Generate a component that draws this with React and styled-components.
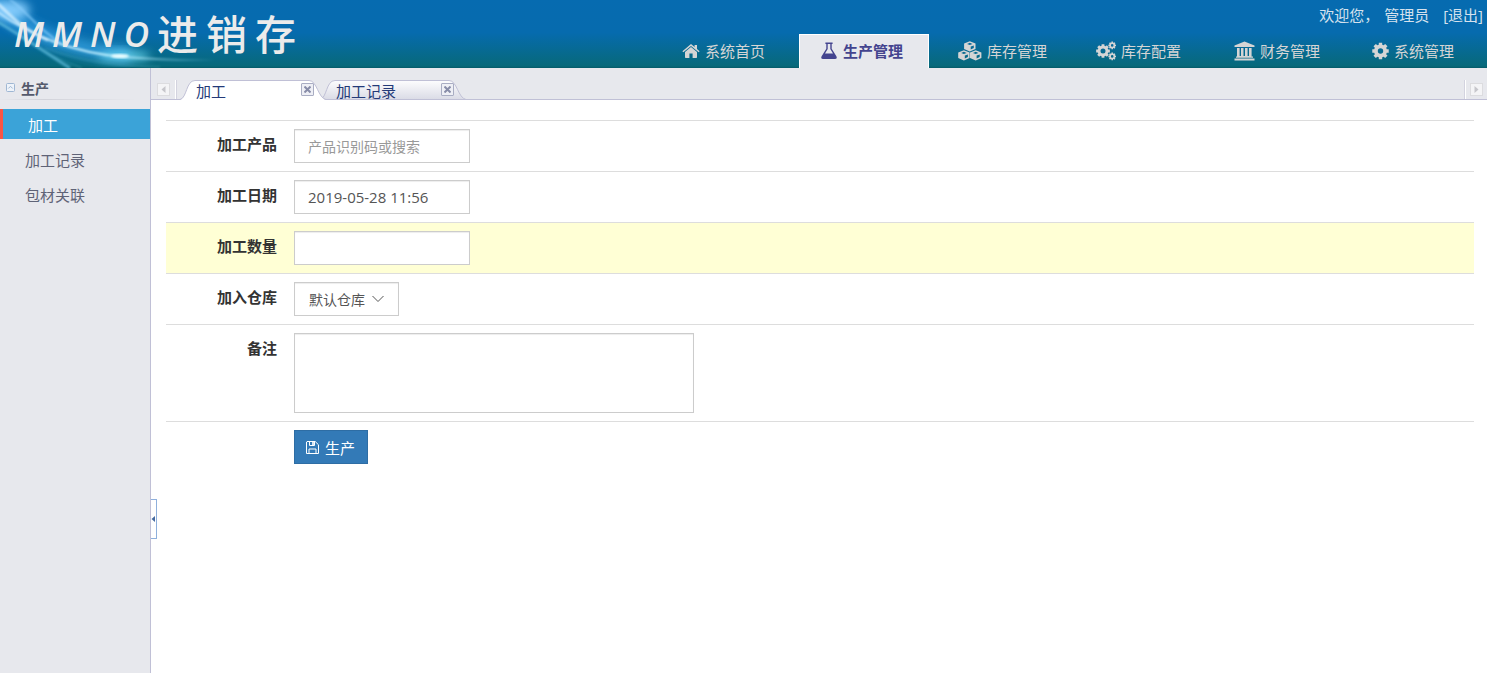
import { useState } from 'react';
import styled, { createGlobalStyle } from 'styled-components';

const GlobalStyle = createGlobalStyle`
  * {
    box-sizing: border-box;
  }
  body {
    margin: 0;
    background: #fff;
    color: #333;
    font-family: "Open Sans", "Noto Sans CJK SC", sans-serif;
    font-size: 15px;
    line-height: 20px;
  }
  input, select, textarea, button {
    font-family: inherit;
    margin: 0;
  }
`;

const Page = styled.div`
  display: flex;
  flex-direction: column;
  min-height: 100vh;
`;

/* header */
const Header = styled.header`
  position: relative;
  display: flex;
  justify-content: space-between;
  height: 68px;
  overflow: hidden;
  background: linear-gradient(#066bb0 0%, #066bae 48%, #07697a 97%, #045a68 100%);
`;

const Glow = styled.svg`
  position: absolute;
  left: 0;
  top: 0;
`;

const Logo = styled.h1`
  position: relative;
  display: flex;
  align-items: center;
  gap: 8px;
  margin: 0;
  padding: 0 0 0 14px;
  color: #ebebeb;
  font-size: 35px;
  font-style: italic;
  font-weight: 600;
  line-height: 68px;
`;

const LogoHan = styled.span`
  font-size: 41px;
  font-style: normal;
  font-weight: 500;
`;

const HeaderSide = styled.div`
  display: flex;
  flex-direction: column;
  justify-content: space-between;
  align-items: flex-end;
`;

const UserBar = styled.div`
  display: flex;
  gap: 5px;
  padding: 5px 4px 0 0;
  color: #d6e2ee;

  a {
    margin-left: 9px;
    color: inherit;
    text-decoration: none;
  }
`;

const Nav = styled.nav`
  display: flex;
  gap: 8px;
  padding-right: 6px;
`;

const NavLink = styled.a`
  display: flex;
  align-items: center;
  gap: 5px;
  width: 130px;
  height: 34px;
  padding: 0 0 2px 20px;
  color: ${(p) => (p.$active ? '#44448f' : '#d5d5d5')};
  background: ${(p) => (p.$active ? '#e7e8ed' : 'transparent')};
  border: solid ${(p) => (p.$active ? '#fff' : 'transparent')};
  border-width: 1px 1px 0;
  font-weight: ${(p) => (p.$active ? 700 : 400)};
  text-decoration: none;
  white-space: nowrap;
`;

/* body */
const Body = styled.div`
  display: flex;
  flex: 1;
`;

const Sidebar = styled.aside`
  position: relative;
  flex: none;
  width: 151px;
  background: #e7e8ed;
  border-right: 1px solid #c0c0d6;
`;

const GroupTitle = styled.h2`
  display: flex;
  align-items: center;
  gap: 6px;
  height: 32px;
  margin: 0 0 9px;
  padding: 11px 0 0 6px;
  color: #555a6c;
  font-size: 14px;
  border-bottom: 1px solid;
  border-image: linear-gradient(90deg, #e7e8ed, #d2d3da 30%, #e7e8ed 90%) 1;
`;

const FoldButton = styled.button`
  display: flex;
  padding: 0 0 3px;
  background: none;
  border: 0;
`;

const Menu = styled.ul`
  display: flex;
  flex-direction: column;
  gap: 5px;
  margin: 0;
  padding: 0;
  list-style: none;
`;

const MenuLink = styled.a`
  display: block;
  height: 30px;
  padding: 6px 0 0 25px;
  color: ${(p) => (p.$active ? '#fff' : '#5f6377')};
  background: ${(p) => (p.$active ? '#3ba3d8' : 'transparent')};
  border-left: ${(p) => (p.$active ? '3px solid #fb5443' : '0')};
  text-decoration: none;
`;

const Collapse = styled.button`
  position: absolute;
  left: 151px;
  bottom: 134px;
  display: flex;
  align-items: center;
  width: 6px;
  height: 40px;
  padding: 0;
  background: #fff;
  border: 1px solid #8fb0dc;
  border-left: 0;
`;

const Main = styled.main`
  flex: 1;
  min-width: 0;
`;

/* tab strip */
const TabBar = styled.div`
  display: flex;
  align-items: flex-end;
  height: 32px;
  background: linear-gradient(#c0c0d6, #c0c0d6) bottom / 100% 1px no-repeat #e7e8ed;
`;

const Scroller = styled.div`
  display: flex;
  align-items: center;
  justify-content: center;
  width: ${(p) => (p.$side === 'left' ? 25 : 22)}px;
  height: 19px;
  margin-bottom: 1px;
  border: solid #fff;
  border-width: ${(p) => (p.$side === 'left' ? '0 1px 0 0' : '0 0 0 1px')};
  box-shadow: ${(p) => (p.$side === 'left' ? '1px' : '-1px')} 0 #d3d3df;
`;

const ScrollButton = styled.button`
  display: flex;
  align-items: center;
  justify-content: center;
  width: 13px;
  height: 13px;
  padding: 0;
  background: #f4f4f6;
  border: 1px solid #dcdcdf;
`;

const Tabs = styled.div`
  display: flex;
  flex: 1;
  padding-left: 4px;
`;

const Tab = styled.div`
  position: relative;
  z-index: ${(p) => (p.$active ? 1 : 0)};
  display: flex;
  align-items: center;
  justify-content: space-between;
  width: 146px;
  height: 20px;
  margin-right: -6px;
  padding: 0 12px 1px 16px;
`;

const TabShape = styled.svg`
  position: absolute;
  left: 0;
  top: 0;
`;

const TabName = styled.a`
  position: relative;
  padding-top: 2px;
  color: #243a78;
  text-decoration: none;
`;

const CloseButton = styled.button`
  position: relative;
  display: flex;
  align-items: center;
  justify-content: center;
  width: 13px;
  height: 13px;
  padding: 0;
  background: #eeeff5;
  border: 1px solid #a9adc3;
  border-radius: 1px;
`;

/* form */
const Form = styled.form`
  margin: 20px 13px 0 15px;
`;

const Row = styled.div`
  display: flex;
  align-items: flex-start;
  gap: 17px;
  padding: 8px 0;
  border-top: 1px solid #ddd;
  background: ${(p) => (p.$highlight ? '#ffffd5' : '#fff')};
`;

const Label = styled.label`
  flex: none;
  width: 111px;
  padding-top: 5px;
  color: #333;
  font-weight: 700;
  text-align: right;
`;

const TextInput = styled.input`
  width: 176px;
  height: 34px;
  padding: 0 13px;
  color: #555;
  font-size: 15px;
  background: #fff;
  border: 1px solid #ccc;
  border-radius: 0;
  box-shadow: inset 0 1px 1px rgba(0, 0, 0, 0.075);
  outline: none;

  &::placeholder {
    color: #999;
    font-size: 14px;
    opacity: 1;
  }
`;

const SelectBox = styled.div`
  position: relative;
  display: flex;
  align-items: center;

  svg {
    position: absolute;
    right: 15px;
    pointer-events: none;
  }
`;

const Select = styled.select`
  width: 105px;
  height: 34px;
  padding: 0 14px;
  appearance: none;
  color: #555;
  font-size: 14px;
  background: #fff;
  border: 1px solid #ccc;
  border-radius: 0;
  box-shadow: inset 0 1px 1px rgba(0, 0, 0, 0.075);
`;

const TextArea = styled.textarea`
  display: block;
  width: 400px;
  height: 80px;
  padding: 6px 12px;
  font-size: 15px;
  border: 1px solid #ccc;
  border-radius: 0;
  box-shadow: inset 0 1px 1px rgba(0, 0, 0, 0.075);
  resize: none;
`;

const SubmitButton = styled.button`
  display: flex;
  align-items: center;
  gap: 6px;
  height: 34px;
  padding: 0 12px 0 11px;
  color: #fff;
  font-size: 15px;
  background: #337ab7;
  border: 1px solid #2e6da4;
`;

/* icons */
const gear = (cx, cy, outer, inner, hole, turn = 0) => {
  const pts = [];
  for (let i = 0; i < 8; i++) {
    const a = (i * Math.PI) / 4 + turn;
    [[-0.27, inner], [-0.2, outer], [0.2, outer], [0.27, inner]].forEach(([d, r]) => {
      pts.push(`${(cx + r * Math.cos(a + d)).toFixed(2)} ${(cy + r * Math.sin(a + d)).toFixed(2)}`);
    });
  }
  return `M${pts.join('L')}ZM${cx - hole} ${cy}a${hole} ${hole} 0 1 0 ${hole * 2} 0a${hole} ${hole} 0 1 0 ${-hole * 2} 0Z`;
};

const HomeIcon = () => (
  <svg width="18" height="16" viewBox="0 0 18 16" fill="currentColor">
    <path d="M9 4 15 9V14.3Q15 15 14.3 15H10.6V10.6H7.4V15H3.7Q3 15 3 14.3V9Z" />
    <path d="M9 1 12.6 4V2H15V6L17.6 8.2 16.7 9.3 9 2.9 1.3 9.3.4 8.2Z" />
  </svg>
);

const FlaskIcon = () => (
  <svg width="18" height="18" viewBox="-1 0 18 18" fill="currentColor">
    <path fillRule="evenodd" d="M4.4 0.6H11.6V2H10.7V6.7L15.4 14.3Q16.6 17 14 17H2Q-.6 17 .6 14.3L5.3 6.7V2H4.4ZM6.7 2V7.1L4 11.5H12L9.3 7.1V2Z" />
  </svg>
);

const Cube = ({ x, y }) => (
  <g transform={`translate(${x} ${y})`}>
    <path fillRule="evenodd" d="M5.7 0 11.4 2.2V7.8L5.7 10.4 0 7.8V2.2ZM5.7 1.6 3 2.7 5.7 3.8 8.4 2.7ZM6.6 5.4V8.2L9.7 6.8V4.2Z" />
  </g>
);

const CubesIcon = () => (
  <svg width="24" height="20" viewBox="0 0 24 20" fill="currentColor">
    <Cube x={6.1} y={0.2} />
    <Cube x={0.2} y={9.2} />
    <Cube x={12} y={9.2} />
  </svg>
);

const CogsIcon = () => (
  <svg width="20" height="20" viewBox="0 0 20 20" fill="currentColor" fillRule="evenodd">
    <path d={gear(7, 10, 7, 5.4, 2.5)} />
    <path d={gear(16.2, 4.4, 3.9, 3, 1.3)} />
    <path d={gear(16.2, 15.4, 3.9, 3, 1.3)} />
  </svg>
);

const BankIcon = () => (
  <svg width="21" height="20" viewBox="0 0 21 20" fill="currentColor">
    <path d="M10.5.5 20.5 4.5V6H.5V4.5ZM3 7H5.6V15H7V7H9.5V15H11V7H13.6V15H15V7H17.6V15.4H19V16.7H2V15.4H3ZM.5 17.5H20.5V19.5H.5Z" />
  </svg>
);

const CogIcon = () => (
  <svg width="17" height="18" viewBox="0 0 17 18" fill="currentColor" fillRule="evenodd">
    <path d={gear(8.5, 9, 8.4, 6.5, 2.7)} />
  </svg>
);

const SaveIcon = () => (
  <svg width="13" height="13" viewBox="0 0 13 13" fill="none" stroke="currentColor">
    <path d="M1 .5H9.2L12.5 3.8V12.5H.5V1ZM3.5.5V4.5H8.5V.5M3 12.5V8H10V12.5" />
    <path d="M7 1V4" strokeWidth="1.6" />
  </svg>
);

const navItems = [
  { name: '系统首页', Icon: HomeIcon },
  { name: '生产管理', Icon: FlaskIcon },
  { name: '库存管理', Icon: CubesIcon },
  { name: '库存配置', Icon: CogsIcon },
  { name: '财务管理', Icon: BankIcon },
  { name: '系统管理', Icon: CogIcon },
];

const menuItems = ['加工', '加工记录', '包材关联'];
const tabItems = ['加工', '加工记录'];

const HeaderGlow = () => (
  <Glow width="310" height="68" viewBox="0 0 310 68" fill="none" aria-hidden="true">
    <defs>
      <filter id="soft" x="-30%" y="-60%" width="160%" height="220%">
        <feGaussianBlur stdDeviation="5" />
      </filter>
      <filter id="fine" x="-10%" y="-20%" width="120%" height="140%">
        <feGaussianBlur stdDeviation="1" />
      </filter>
      <linearGradient id="fade">
        <stop offset="0" stopColor="#bfe6ff" />
        <stop offset="0.5" stopColor="#bff0ff" />
        <stop offset="1" stopColor="#7fd0e8" stopOpacity="0" />
      </linearGradient>
    </defs>
    <path d="M-10 0C20 30 70 52 130 54" stroke="#35a0e4" strokeWidth="17" opacity="0.75" filter="url(#soft)" />
    <ellipse cx="10" cy="10" rx="20" ry="10" fill="#8bd0ff" opacity="0.9" filter="url(#soft)" />
    <ellipse cx="124" cy="56" rx="26" ry="5" fill="#6fdcf5" opacity="0.9" filter="url(#soft)" />
    <g filter="url(#fine)">
      <path d="M-2 12C30 36 75 53 124 57S190 60 215 60" stroke="url(#fade)" strokeWidth="2" />
      <path d="M-2 4C12 16 20 28 48 40" stroke="#d5efff" strokeWidth="3" opacity="0.8" />
      <path d="M10 0C24 8 36 28 62 44" stroke="#8fd2ff" strokeWidth="2" opacity="0.7" />
      <path d="M-2 22C25 38 45 52 70 68" stroke="#62bfe0" strokeWidth="3" opacity="0.7" />
      <path d="M20 38C45 52 60 60 82 68M45 48C80 62 120 66 160 67" stroke="#4fb0c8" strokeWidth="1" opacity="0.5" />
    </g>
    <ellipse cx="120" cy="56" rx="9" ry="2" fill="#e8fdff" filter="url(#fine)" />
  </Glow>
);

const App = () => {
  const [form, setForm] = useState({ product: '', date: '2019-05-28 11:56', count: '', store: '默认仓库', remark: '' });

  const handleChange = (e) => {
    setForm({ ...form, [e.target.name]: e.target.value });
  };

  return (
    <Page>
      <GlobalStyle />
      <Header>
        <HeaderGlow />
        <Logo>
          {['M', 'M', 'N', 'O'].map((c, i) => <span key={i}>{c}</span>)}
          {['进', '销', '存'].map((c) => <LogoHan key={c}>{c}</LogoHan>)}
        </Logo>
        <HeaderSide>
          <UserBar>
            <span>欢迎您，</span>
            <span>管理员</span>
            <a href="#logout">[退出]</a>
          </UserBar>
          <Nav>
            {navItems.map(({ name, Icon }, i) => (
              <NavLink key={name} href="#nav" $active={i === 1}>
                <Icon />
                {name}
              </NavLink>
            ))}
          </Nav>
        </HeaderSide>
      </Header>

      <Body>
        <Sidebar>
          <GroupTitle>
            <FoldButton type="button" aria-label="收起">
              <svg width="9" height="9" viewBox="0 0 9 9" fill="none" stroke="#9fb7d3">
                <rect x=".5" y=".5" width="8" height="8" rx="1" fill="#eef3fa" />
                <path d="M2.3 5.5 4.5 3.3 6.7 5.5" />
              </svg>
            </FoldButton>
            生产
          </GroupTitle>
          <Menu>
            {menuItems.map((name, i) => (
              <li key={name}>
                <MenuLink href="#menu" $active={i === 0}>{name}</MenuLink>
              </li>
            ))}
          </Menu>
          <Collapse type="button" aria-label="折叠">
            <svg width="4" height="6" viewBox="0 0 4 6"><path d="M4 0V6L.5 3Z" fill="#44699f" /></svg>
          </Collapse>
        </Sidebar>

        <Main>
          <TabBar>
            <Scroller $side="left">
              <ScrollButton type="button" aria-label="向左">
                <svg width="5" height="7" viewBox="0 0 5 7"><path d="M4.5 0V7L.5 3.5Z" fill="#c6c6cb" /></svg>
              </ScrollButton>
            </Scroller>
            <Tabs>
              {tabItems.map((name, i) => (
                <Tab key={name} $active={i === 0}>
                  <TabShape width="146" height="20" viewBox="0 0 146 20" aria-hidden="true">
                    <defs>
                      <linearGradient id="tabIdle" x2="0" y2="1">
                        <stop offset="0" stopColor="#fdfdfe" />
                        <stop offset="1" stopColor="#d9dae5" />
                      </linearGradient>
                    </defs>
                    <path
                      d="M0 20C7 18 6 .5 15 .5H129C137 .5 138 18 146 20Z"
                      fill={i === 0 ? '#fff' : 'url(#tabIdle)'}
                    />
                    <path
                      d={i === 0
                        ? 'M0 19.5C7 18 6 .5 15 .5H129C137 .5 138 18 146 19.5'
                        : 'M0 19.5C7 18 6 .5 15 .5H129C137 .5 138 18 146 19.5Z'}
                      fill="none"
                      stroke="#c0c0d6"
                    />
                  </TabShape>
                  <TabName href="#tab">{name}</TabName>
                  <CloseButton type="button" aria-label="关闭">
                    <svg width="7" height="7" viewBox="0 0 7 7" stroke="#878ca8" strokeWidth="2">
                      <path d="M.5.5 6.5 6.5M6.5.5.5 6.5" />
                    </svg>
                  </CloseButton>
                </Tab>
              ))}
            </Tabs>
            <Scroller $side="right">
              <ScrollButton type="button" aria-label="向右">
                <svg width="5" height="7" viewBox="0 0 5 7"><path d="M.5 0V7L4.5 3.5Z" fill="#c6c6cb" /></svg>
              </ScrollButton>
            </Scroller>
          </TabBar>

          <Form onSubmit={(e) => e.preventDefault()}>
            <Row>
              <Label htmlFor="product">加工产品</Label>
              <TextInput id="product" name="product" placeholder="产品识别码或搜索" value={form.product} onChange={handleChange} />
            </Row>
            <Row>
              <Label htmlFor="date">加工日期</Label>
              <TextInput id="date" name="date" value={form.date} onChange={handleChange} />
            </Row>
            <Row $highlight>
              <Label htmlFor="count">加工数量</Label>
              <TextInput id="count" name="count" value={form.count} onChange={handleChange} />
            </Row>
            <Row>
              <Label htmlFor="store">加入仓库</Label>
              <SelectBox>
                <Select id="store" name="store" value={form.store} onChange={handleChange}>
                  <option>默认仓库</option>
                </Select>
                <svg width="12" height="8" viewBox="0 0 12 8" fill="none" stroke="#555">
                  <path d="M.5 1 6 6.5 11.5 1" />
                </svg>
              </SelectBox>
            </Row>
            <Row>
              <Label htmlFor="remark">备注</Label>
              <TextArea id="remark" name="remark" value={form.remark} onChange={handleChange} />
            </Row>
            <Row>
              <Label as="span" />
              <SubmitButton type="submit">
                <SaveIcon />
                生产
              </SubmitButton>
            </Row>
          </Form>
        </Main>
      </Body>
    </Page>
  );
};

export default App;
